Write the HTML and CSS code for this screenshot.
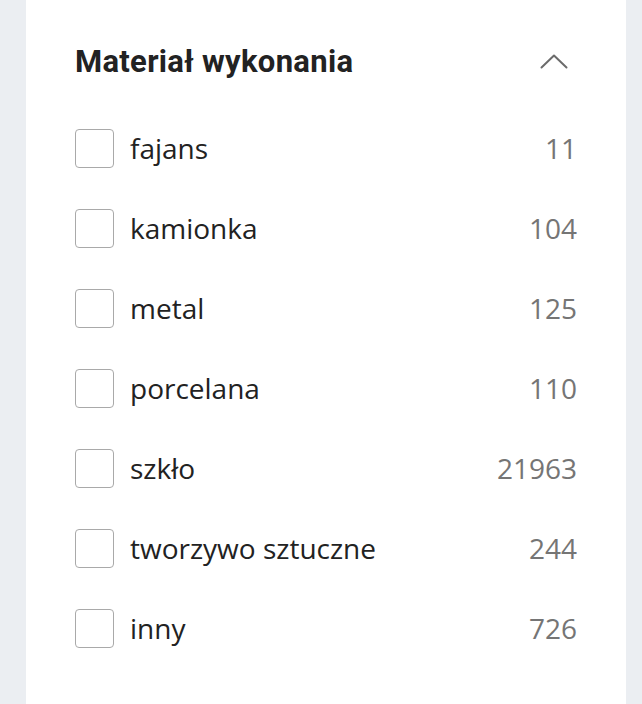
FILE: index.html
```html
<!DOCTYPE html>
<html lang="pl">
<head>
    <meta charset="UTF-8">
    <meta name="viewport" content="width=device-width, initial-scale=1.0">
    <title>Filtr</title>
    <link rel="stylesheet" href="styles.css">
</head>
<body>
    <div class="panel">
        <div class="filter-header">
            <h2>Materiał wykonania</h2>
            <svg class="chevron" width="28" height="16" viewBox="0 0 28 16">
                <polyline points="1.5,14.5 14,2.5 26.5,14.5" fill="none" stroke="#6b6b6b" stroke-width="2" stroke-linecap="round" stroke-linejoin="round"/>
            </svg>
        </div>
        <ul class="filter-list">
            <li><span class="box"></span><span class="label">fajans</span><span class="count">11</span></li>
            <li><span class="box"></span><span class="label">kamionka</span><span class="count">104</span></li>
            <li><span class="box"></span><span class="label">metal</span><span class="count">125</span></li>
            <li><span class="box"></span><span class="label">porcelana</span><span class="count">110</span></li>
            <li><span class="box"></span><span class="label">szkło</span><span class="count">21963</span></li>
            <li><span class="box"></span><span class="label">tworzywo sztuczne</span><span class="count">244</span></li>
            <li><span class="box"></span><span class="label">inny</span><span class="count">726</span></li>
        </ul>
    </div>
</body>
</html>
```

FILE: styles.css
```css
body {
    margin: 0;
    padding: 0;
    background: #ebeef2;
    font-family: 'Open Sans', sans-serif;
    color: #222;
}
.panel {
    margin-left: 26px;
    width: 600px;
    min-height: 704px;
    box-sizing: border-box;
    padding: 30px 49px 0 49px;
    background: white;
}
.filter-header {
    height: 62px;
    display: flex;
    align-items: center;
    justify-content: space-between;
}
.filter-header h2 {
    margin: 0;
    font-family: 'Roboto', sans-serif;
    font-weight: bold;
    font-size: 31px;
    letter-spacing: 0.3px;
    color: #222;
}
.chevron {
    margin-right: 9px;
}
.filter-list {
    list-style-type: none;
    margin: 16px 0 0 0;
    padding: 0;
}
.filter-list li {
    height: 80px;
    display: flex;
    align-items: center;
}
.box {
    width: 39px;
    height: 39px;
    box-sizing: border-box;
    border: 1.5px solid #a9a9a9;
    border-radius: 4px;
    margin-right: 16px;
}
.label {
    flex: 1;
    font-size: 28px;
    color: #222;
}
.count {
    font-size: 28px;
    color: #757575;
}
```
